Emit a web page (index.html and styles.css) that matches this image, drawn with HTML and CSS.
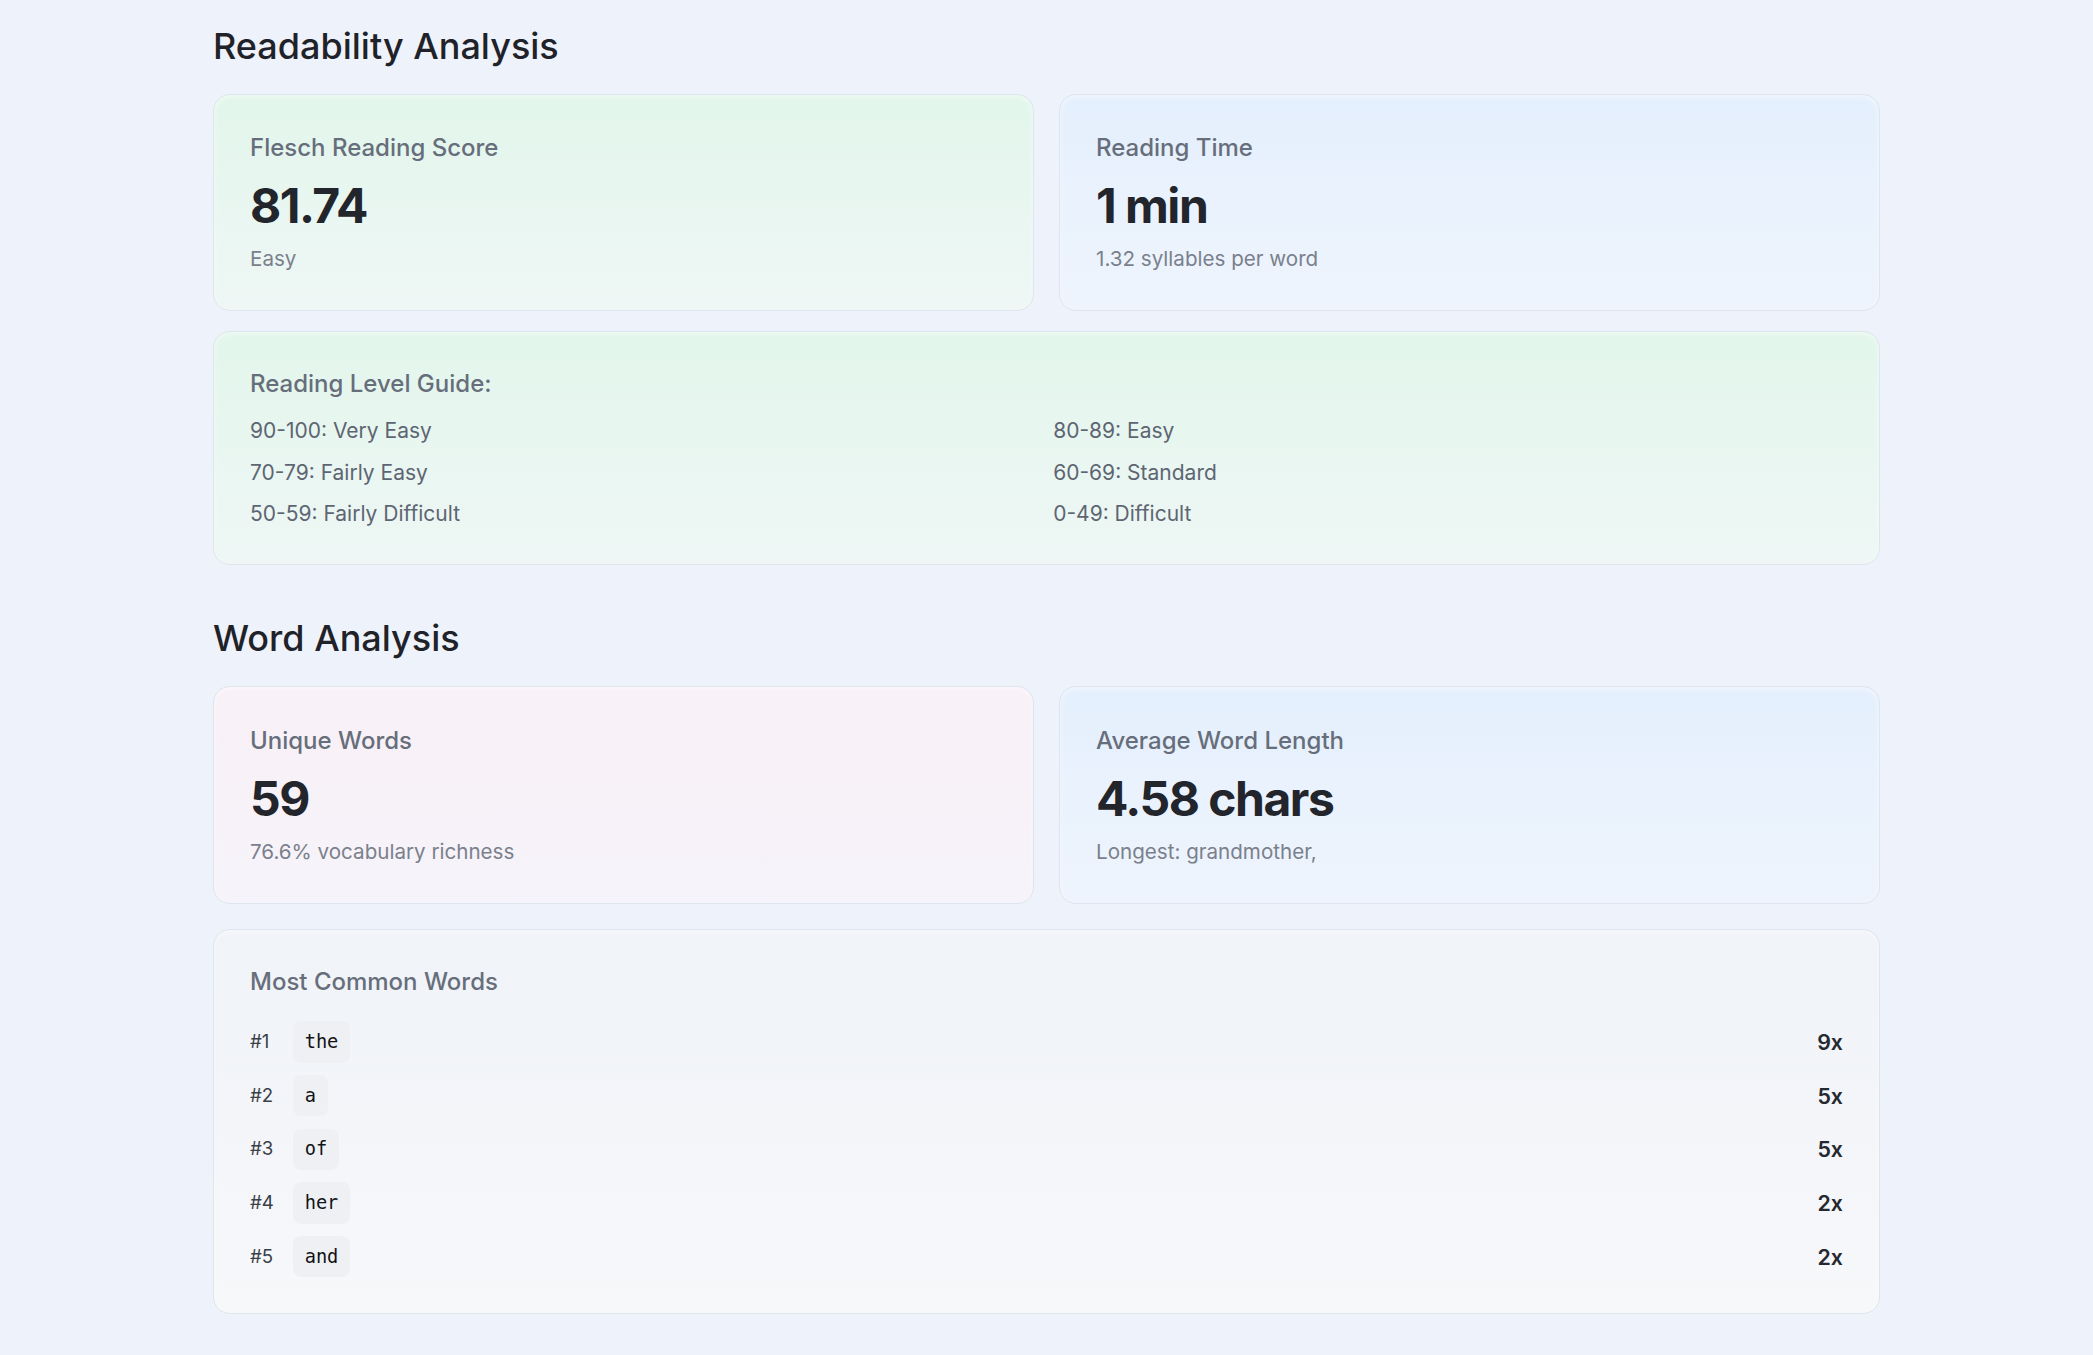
FILE: index.html
```html
<!DOCTYPE html>
<html lang="en">
<head>
<meta charset="utf-8">
<title>Text Analysis</title>
<link rel="stylesheet" href="styles.css">
</head>
<body>
<main class="page">
  <section class="section">
    <h2 class="section-title">Readability Analysis</h2>
    <div class="stat-grid stat-grid-tight">
      <div class="card card-green">
        <div class="card-label">Flesch Reading Score</div>
        <div class="card-value">81.74</div>
        <div class="card-sub">Easy</div>
      </div>
      <div class="card card-blue">
        <div class="card-label">Reading Time</div>
        <div class="card-value">1 min</div>
        <div class="card-sub">1.32 syllables per word</div>
      </div>
    </div>
    <div class="card card-green">
      <div class="card-label guide-title">Reading Level Guide:</div>
      <div class="guide-grid">
        <div class="guide-item">90-100: Very Easy</div>
        <div class="guide-item">80-89: Easy</div>
        <div class="guide-item">70-79: Fairly Easy</div>
        <div class="guide-item">60-69: Standard</div>
        <div class="guide-item">50-59: Fairly Difficult</div>
        <div class="guide-item">0-49: Difficult</div>
      </div>
    </div>
  </section>

  <section class="section">
    <h2 class="section-title">Word Analysis</h2>
    <div class="stat-grid stat-grid-wide">
      <div class="card card-pink">
        <div class="card-label">Unique Words</div>
        <div class="card-value">59</div>
        <div class="card-sub">76.6% vocabulary richness</div>
      </div>
      <div class="card card-blue">
        <div class="card-label">Average Word Length</div>
        <div class="card-value">4.58 chars</div>
        <div class="card-sub">Longest: grandmother,</div>
      </div>
    </div>
    <div class="card card-gray">
      <div class="card-label words-title">Most Common Words</div>
      <ul class="word-list">
        <li class="word-row"><span class="word-rank">#1</span><code class="word-pill">the</code><span class="word-count">9x</span></li>
        <li class="word-row"><span class="word-rank">#2</span><code class="word-pill">a</code><span class="word-count">5x</span></li>
        <li class="word-row"><span class="word-rank">#3</span><code class="word-pill">of</code><span class="word-count">5x</span></li>
        <li class="word-row"><span class="word-rank">#4</span><code class="word-pill">her</code><span class="word-count">2x</span></li>
        <li class="word-row"><span class="word-rank">#5</span><code class="word-pill">and</code><span class="word-count">2x</span></li>
      </ul>
    </div>
  </section>
</main>
</body>
</html>
```

FILE: styles.css
```css
* { box-sizing: border-box; }

html, body {
  margin: 0;
  padding: 0;
}

body {
  background: #eef2fa;
  font-family: Inter, "Noto Sans", "Liberation Sans", sans-serif;
  color: #1f2329;
}

.page {
  width: 1667px;
  margin: 0 auto;
  padding-top: 24px;
  padding-bottom: 40px;
}

.section + .section {
  margin-top: 51px;
}

.section-title {
  margin: 0 0 26px 0;
  font-size: 36px;
  line-height: 44px;
  font-weight: 500;
  color: #1f2329;
}

.stat-grid {
  display: grid;
  grid-template-columns: 1fr 1fr;
  column-gap: 25px;
}

.stat-grid-tight { margin-bottom: 19.5px; }
.stat-grid-wide { margin-bottom: 25.5px; }

.card {
  border: 1px solid #dfe5ee;
  border-radius: 17px;
  padding: 36px;
  box-shadow: inset 0 2px 6px rgba(255, 255, 255, 0.5);
}

.stat-grid .card {
  padding-top: 37.3px;
  padding-bottom: 35px;
}

.card-green {
  background: linear-gradient(180deg, #e2f6eb 0%, #e8f6f0 45%, #eef7f5 100%);
}

.card-blue {
  background: linear-gradient(180deg, #e4effd 0%, #e9f2fd 45%, #eef4fd 100%);
}

.card-pink {
  background: linear-gradient(180deg, #f8f1f7 0%, #f7f2f8 50%, #f6f3fa 100%);
}

.card-gray {
  background: linear-gradient(180deg, #f0f3f8 0%, #f3f5f9 50%, #f7f8fa 100%);
}

.card-label {
  font-size: 24px;
  line-height: 32px;
  font-weight: 500;
  color: #676e7b;
  margin-bottom: 15px;
}

.card-value {
  font-size: 48px;
  line-height: 53px;
  font-weight: 700;
  color: #22252b;
  margin-bottom: 11px;
  letter-spacing: -1.5px;
}

.card-sub {
  font-size: 20.6px;
  line-height: 32px;
  color: #7a808c;
}

.guide-title {
  margin-bottom: 17px;
}

.guide-grid {
  display: grid;
  grid-template-columns: 1fr 1fr;
  column-gap: 13.33px;
  row-gap: 13.8px;
}

.guide-item {
  font-size: 21px;
  line-height: 28px;
  color: #5e6572;
}

.words-title {
  margin-bottom: 23px;
}

.word-list {
  list-style: none;
  margin: 0;
  padding: 0;
  display: flex;
  flex-direction: column;
  gap: 12.4px;
}

.word-row {
  display: flex;
  align-items: center;
}

.word-rank {
  width: 42.67px;
  font-size: 18.67px;
  line-height: 28px;
  color: #3a3f48;
}

.word-pill {
  font-family: "DejaVu Sans Mono", "Liberation Mono", monospace;
  font-size: 18.67px;
  line-height: 28px;
  padding: 6.67px 12px;
  background: #eff0f3;
  border-radius: 8px;
  color: #111317;
}

.word-count {
  margin-left: auto;
  font-size: 21.33px;
  line-height: 28px;
  font-weight: 600;
  color: #25282e;
}
```
